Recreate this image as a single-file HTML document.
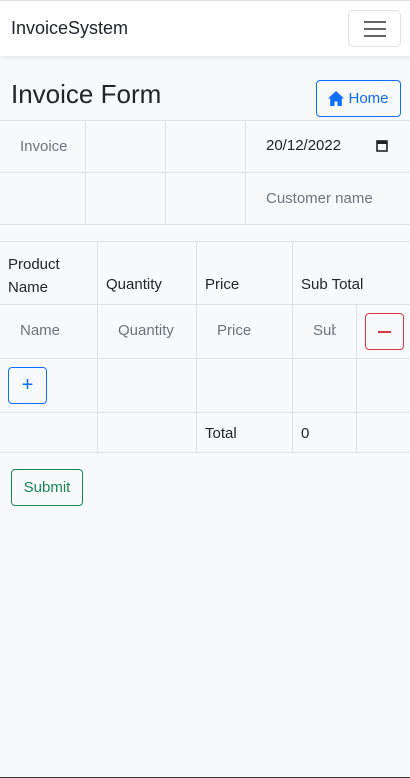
<!DOCTYPE html>
<html><head><style>
*{box-sizing:border-box;margin:0;padding:0}
body{width:410px;height:778px;background:#f8f9fa;font-family:"Liberation Sans",sans-serif;position:relative;overflow:hidden;color:#212529}
.a{position:absolute}
.nav{left:0;top:0;width:410px;height:56px;background:#fff;border-top:1px solid #dee2e6;box-shadow:0 2px 4px rgba(0,0,0,.08)}
.h{background:#dee2e6}
.t{font-size:15px;white-space:nowrap}
.ph{color:#6c757d}
.btn{border:1px solid;border-radius:4px;display:flex;align-items:center;justify-content:center}
</style></head><body>
<div class="a nav"></div>
<div class="a t" style="left:11px;top:18px;font-size:18px;color:#212529">InvoiceSystem</div>
<div class="a btn" style="left:348px;top:10px;width:53px;height:37px;border-color:#dee2e6;border-radius:5px">
<svg width="24" height="20"><path d="M1 3h22M1 10h22M1 17h22" stroke="#666" stroke-width="2"/></svg></div>
<div class="a" style="left:11px;top:79px;font-size:26px;color:#212529">Invoice Form</div>
<div class="a btn" style="left:316px;top:80px;width:85px;height:37px;border-color:#0d6efd;color:#0d6efd;font-size:15px;gap:4px">
<svg width="16" height="15" viewBox="0 0 16 15"><path d="M8 0L0 7.5h2.2V15h4.3v-4.5h3V15h4.3V7.5H16z" fill="#0d6efd"/></svg>Home</div>

<div class="a h" style="left:0;top:120px;width:410px;height:1px"></div>
<div class="a h" style="left:0;top:172px;width:410px;height:1px"></div>
<div class="a h" style="left:0;top:224px;width:410px;height:1px"></div>
<div class="a h" style="left:85px;top:120px;width:1px;height:104px"></div>
<div class="a h" style="left:165px;top:120px;width:1px;height:104px"></div>
<div class="a h" style="left:245px;top:120px;width:1px;height:104px"></div>
<div class="a t ph" style="left:20px;top:138px">Invoice</div>
<div class="a t" style="left:266px;top:137px">20/12/2022</div>
<svg class="a" style="left:376px;top:139px" width="12" height="13"><rect x="1" y="2" width="10" height="10" fill="none" stroke="#222" stroke-width="1.6"/><rect x="1" y="2" width="10" height="3" fill="#222"/></svg>
<div class="a t ph" style="left:266px;top:190px">Customer name</div>

<div class="a h" style="left:0;top:241px;width:410px;height:1px"></div>
<div class="a h" style="left:0;top:304px;width:410px;height:1px"></div>
<div class="a h" style="left:0;top:358px;width:410px;height:1px"></div>
<div class="a h" style="left:0;top:412px;width:410px;height:1px"></div>
<div class="a h" style="left:0;top:452px;width:410px;height:1px"></div>
<div class="a h" style="left:97px;top:241px;width:1px;height:211px"></div>
<div class="a h" style="left:196px;top:241px;width:1px;height:211px"></div>
<div class="a h" style="left:292px;top:241px;width:1px;height:211px"></div>
<div class="a h" style="left:356px;top:304px;width:1px;height:148px"></div>
<div class="a t" style="left:8px;top:253px;line-height:23px">Product<br>Name</div>
<div class="a t" style="left:106px;top:276px">Quantity</div>
<div class="a t" style="left:205px;top:276px">Price</div>
<div class="a t" style="left:301px;top:276px">Sub Total</div>
<div class="a t ph" style="left:20px;top:322px">Name</div>
<div class="a t ph" style="left:118px;top:322px">Quantity</div>
<div class="a t ph" style="left:217px;top:322px">Price</div>
<div class="a t ph" style="left:313px;top:322px;width:23px;overflow:hidden">Sub</div>
<div class="a btn" style="left:365px;top:313px;width:39px;height:37px;border-color:#dc3545"><div style="width:13px;height:2px;background:#dc3545"></div></div>
<div class="a btn" style="left:8px;top:367px;width:39px;height:37px;border-color:#0d6efd;color:#0d6efd;font-size:20px">+</div>
<div class="a t" style="left:205px;top:425px">Total</div>
<div class="a t" style="left:301px;top:425px">0</div>
<div class="a btn" style="left:11px;top:469px;width:72px;height:37px;border-color:#198754;color:#198754;font-size:15px">Submit</div>
<div class="a" style="left:0;top:777px;width:410px;height:1px;background:#333"></div>
</body></html>
